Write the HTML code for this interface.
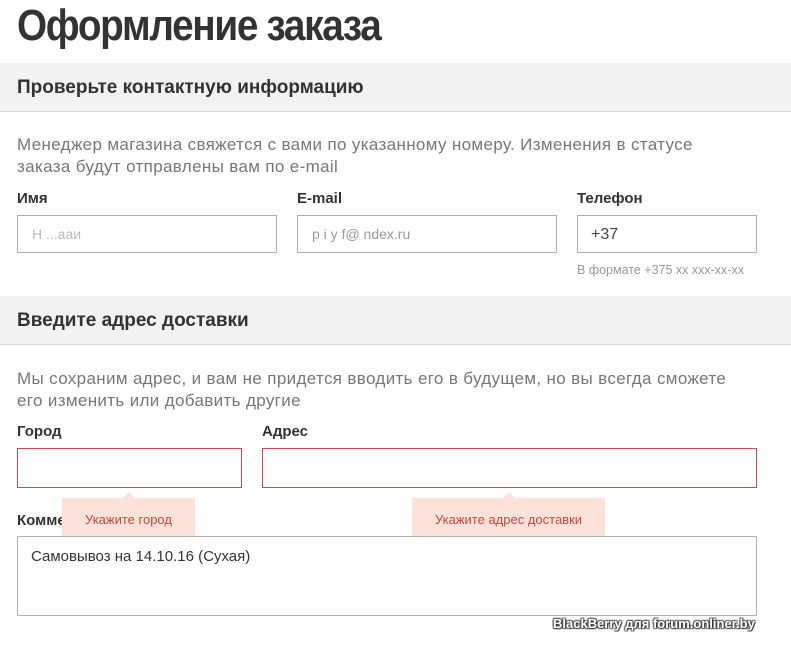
<!DOCTYPE html>
<html><head><meta charset="utf-8"><style>
body{margin:0;width:791px;height:648px;background:#fff;font-family:"Liberation Sans",sans-serif;position:relative;overflow:hidden;color:#333}
.a{position:absolute;white-space:nowrap}
.band{position:absolute;left:0;width:791px;height:48px;background:#f2f2f2;border-bottom:1px solid #d8d8d8}
.band span{position:absolute;left:17px;top:14px;font-size:19px;font-weight:bold;color:#333;letter-spacing:0px}
.p{font-size:17px;color:#777;line-height:22px;letter-spacing:0.35px}
.l{font-size:15px;font-weight:bold;color:#333}
.in{position:absolute;height:38px;border:1px solid #b0b0b0;box-sizing:border-box;background:#fff}
.red{border-color:#c84a4a}
.tip{position:absolute;height:44px;background:#fde2da;color:#c9453c;font-size:13px;text-align:center;line-height:44px}
.tip:before{content:"";position:absolute;top:-6px;left:50%;margin-left:-6px;border:6px solid transparent;border-top:0;border-bottom-color:#fde2da}
</style></head><body>
<div class="a" style="left:17px;top:1px;font-size:44px;font-weight:bold;color:#333;letter-spacing:-1.5px;transform:scaleX(0.88);transform-origin:0 0">Оформление заказа</div>
<div class="band" style="top:63px"><span>Проверьте контактную информацию</span></div>
<div class="a p" style="left:17px;top:134px">Менеджер магазина свяжется с вами по указанному номеру. Изменения в статусе<br>заказа будут отправлены вам по e-mail</div>
<div class="a l" style="left:17px;top:190px">Имя</div>
<div class="a l" style="left:297px;top:190px">E-mail</div>
<div class="a l" style="left:577px;top:190px">Телефон</div>
<div class="in" style="left:17px;top:215px;width:260px"><span class="a" style="left:14px;top:10px;font-size:14px;color:#bbb">Н     ...ааи</span></div>
<div class="in" style="left:297px;top:215px;width:260px"><span class="a" style="left:14px;top:10px;font-size:14px;color:#999">p    i    y   f@     ndex.ru</span></div>
<div class="in" style="left:577px;top:215px;width:180px"><span class="a" style="left:13px;top:10px;font-size:16px;color:#444">+37</span></div>
<div class="a" style="left:577px;top:263px;font-size:12.5px;color:#999">В формате +375 xx xxx-xx-xx</div>
<div class="band" style="top:296px"><span>Введите адрес доставки</span></div>
<div class="a p" style="left:17px;top:368px">Мы сохраним адрес, и вам не придется вводить его в будущем, но вы всегда сможете<br>его изменить или добавить другие</div>
<div class="a l" style="left:17px;top:423px">Город</div>
<div class="a l" style="left:262px;top:423px">Адрес</div>
<div class="in red" style="left:17px;top:448px;width:225px;height:40px"></div>
<div class="in red" style="left:262px;top:448px;width:495px;height:40px"></div>
<div class="a l" style="left:17px;top:512px">Комментарий к заказу</div>
<div class="tip" style="left:62px;top:498px;width:133px">Укажите город</div>
<div class="tip" style="left:412px;top:498px;width:193px">Укажите адрес доставки</div>
<div class="in" style="left:17px;top:536px;width:740px;height:80px"><span class="a" style="left:13px;top:11px;font-size:15px;color:#333">Самовывоз на 14.10.16 (Сухая)</span></div>
<div class="a" style="left:553px;top:616px;font-size:13px;font-weight:bold;color:#fff;text-shadow:1px 1px 1px #333,-1px -1px 1px #555,1px -1px 1px #555,-1px 1px 1px #555">BlackBerry для forum.onliner.by</div>
</body></html>
